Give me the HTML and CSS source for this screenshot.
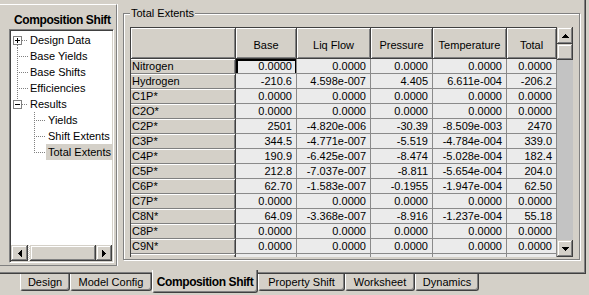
FILE: index.html
```html
<!DOCTYPE html>
<html>
<head>
<meta charset="utf-8">
<title>Composition Shift</title>
<link rel="stylesheet" href="styles.css">
</head>
<body>
<div class="window">
  <div class="body">
    <div class="left">
      <div class="title">Composition Shift</div>
      <div class="tree">
        <div class="items">
          <div class="row">
            <svg class="tw0" width="17" height="16" viewBox="0 0 17 16"><line x1="11" y1="8.5" x2="17" y2="8.5" class="dot"/><line x1="6.5" y1="13" x2="6.5" y2="16" class="dot"/><rect x="2.5" y="4.5" width="8" height="8" fill="#fff" stroke="#808080"/><rect x="4" y="8" width="5" height="1"/><rect x="6" y="6" width="1" height="5"/></svg>
            <span class="label">Design Data</span>
          </div>
          <div class="row">
            <svg class="tw0" width="17" height="16" viewBox="0 0 17 16"><line x1="6.5" y1="0" x2="6.5" y2="16" class="dot"/><line x1="8" y1="8.5" x2="17" y2="8.5" class="dot"/></svg>
            <span class="label">Base Yields</span>
          </div>
          <div class="row">
            <svg class="tw0" width="17" height="16" viewBox="0 0 17 16"><line x1="6.5" y1="0" x2="6.5" y2="16" class="dot"/><line x1="8" y1="8.5" x2="17" y2="8.5" class="dot"/></svg>
            <span class="label">Base Shifts</span>
          </div>
          <div class="row">
            <svg class="tw0" width="17" height="16" viewBox="0 0 17 16"><line x1="6.5" y1="0" x2="6.5" y2="16" class="dot"/><line x1="8" y1="8.5" x2="17" y2="8.5" class="dot"/></svg>
            <span class="label">Efficiencies</span>
          </div>
          <div class="row">
            <svg class="tw0" width="17" height="16" viewBox="0 0 17 16"><line x1="6.5" y1="0" x2="6.5" y2="4" class="dot"/><line x1="11" y1="8.5" x2="17" y2="8.5" class="dot"/><rect x="2.5" y="4.5" width="8" height="8" fill="#fff" stroke="#808080"/><rect x="4" y="8" width="5" height="1"/></svg>
            <span class="label">Results</span>
          </div>
          <div class="row">
            <svg class="tw1" width="35" height="16" viewBox="0 0 35 16"><line x1="23.5" y1="0" x2="23.5" y2="16" class="dot"/><line x1="25" y1="8.5" x2="35" y2="8.5" class="dot"/></svg>
            <span class="label">Yields</span>
          </div>
          <div class="row">
            <svg class="tw1" width="35" height="16" viewBox="0 0 35 16"><line x1="23.5" y1="0" x2="23.5" y2="16" class="dot"/><line x1="25" y1="8.5" x2="35" y2="8.5" class="dot"/></svg>
            <span class="label">Shift Extents</span>
          </div>
          <div class="row sel">
            <svg class="tw1" width="35" height="16" viewBox="0 0 35 16"><line x1="23.5" y1="0" x2="23.5" y2="9" class="dot"/><line x1="25" y1="8.5" x2="35" y2="8.5" class="dot"/></svg>
            <span class="label">Total Extents</span>
          </div>
        </div>
        <div class="hscroll">
          <div class="sbtn sbtn-h"><svg width="4" height="7" viewBox="0 0 4 7"><path d="M3 0h1v7H3V6H2V5H1V4H0V3h1V2h1V1h1z"/></svg></div>
          <div class="htrack"><div class="hthumb"></div></div>
          <div class="sbtn sbtn-h sbtn-r"><svg width="4" height="7" viewBox="0 0 4 7"><path d="M0 0h1v1h1v1h1v1h1v1H3v1H2v1H1v1H0z"/></svg></div>
        </div>
      </div>
    </div>

    <div class="group">
      <span class="legend">Total Extents</span>
      <div class="gridwrap">
        <div class="grid">
          <table>
            <colgroup>
              <col class="c-rh"><col class="c-base"><col class="c-liq"><col class="c-pres"><col class="c-temp"><col class="c-tot">
            </colgroup>
            <thead>
              <tr><th></th><th>Base</th><th>Liq Flow</th><th>Pressure</th><th>Temperature</th><th>Total</th></tr>
            </thead>
            <tbody>
              <tr><td class="rh">Nitrogen</td><td class="focus">0.0000</td><td>0.0000</td><td>0.0000</td><td>0.0000</td><td>0.0000</td></tr>
              <tr><td class="rh">Hydrogen</td><td>-210.6</td><td>4.598e-007</td><td>4.405</td><td>6.611e-004</td><td>-206.2</td></tr>
              <tr><td class="rh">C1P*</td><td>0.0000</td><td>0.0000</td><td>0.0000</td><td>0.0000</td><td>0.0000</td></tr>
              <tr><td class="rh">C2O*</td><td>0.0000</td><td>0.0000</td><td>0.0000</td><td>0.0000</td><td>0.0000</td></tr>
              <tr><td class="rh">C2P*</td><td>2501</td><td>-4.820e-006</td><td>-30.39</td><td>-8.509e-003</td><td>2470</td></tr>
              <tr><td class="rh">C3P*</td><td>344.5</td><td>-4.771e-007</td><td>-5.519</td><td>-4.784e-004</td><td>339.0</td></tr>
              <tr><td class="rh">C4P*</td><td>190.9</td><td>-6.425e-007</td><td>-8.474</td><td>-5.028e-004</td><td>182.4</td></tr>
              <tr><td class="rh">C5P*</td><td>212.8</td><td>-7.037e-007</td><td>-8.811</td><td>-5.654e-004</td><td>204.0</td></tr>
              <tr><td class="rh">C6P*</td><td>62.70</td><td>-1.583e-007</td><td>-0.1955</td><td>-1.947e-004</td><td>62.50</td></tr>
              <tr><td class="rh">C7P*</td><td>0.0000</td><td>0.0000</td><td>0.0000</td><td>0.0000</td><td>0.0000</td></tr>
              <tr><td class="rh">C8N*</td><td>64.09</td><td>-3.368e-007</td><td>-8.916</td><td>-1.237e-004</td><td>55.18</td></tr>
              <tr><td class="rh">C8P*</td><td>0.0000</td><td>0.0000</td><td>0.0000</td><td>0.0000</td><td>0.0000</td></tr>
              <tr><td class="rh">C9N*</td><td>0.0000</td><td>0.0000</td><td>0.0000</td><td>0.0000</td><td>0.0000</td></tr>
              <tr><td class="rh">C9P*</td><td>686.1</td><td>-2.023e-007</td><td>-0.2703</td><td>-3.991e-004</td><td>685.4</td></tr>
            </tbody>
          </table>
        </div>
        <div class="vscroll">
          <div class="sbtn sbtn-v"><svg width="7" height="4" viewBox="0 0 7 4"><path d="M3 0h1v1h1v1h1v1h1v1H0V3h1V2h1V1h1z"/></svg></div>
          <div class="vthumb"></div>
          <div class="vtrack"></div>
          <div class="sbtn sbtn-v"><svg width="7" height="4" viewBox="0 0 7 4"><path d="M0 0h7v1H6v1H5v1H4v1H3V3H2V2H1V1H0z"/></svg></div>
        </div>
      </div>
    </div>
  </div>

  <div class="tabs">
    <div class="tab">Design</div>
    <div class="tab">Model Config</div>
    <div class="tab active">Composition Shift</div>
    <div class="tab">Property Shift</div>
    <div class="tab">Worksheet</div>
    <div class="tab">Dynamics</div>
  </div>
</div>
</body>
</html>
```

FILE: styles.css
```css
* { box-sizing: border-box; }

html, body {
  margin: 0;
  padding: 0;
}

body {
  width: 589px;
  height: 295px;
  overflow: hidden;
  background: #d4d0c8;
  color: #000;
  font-family: "Liberation Sans", Arial, sans-serif;
  font-size: 11px;
}

.window {
  width: 589px;
  height: 295px;
}

/* tab control body */
.body {
  width: 586px;
  height: 274px;
  display: flex;
  align-items: flex-start;
  border-right: 1px solid #404040;
  border-bottom: 1px solid #404040;
  box-shadow: inset -1px -1px 0 #808080;
}

/* left navigation pane */
.left {
  width: 117px;
  height: 262px;
  margin-top: 4px;
  display: flex;
  flex-direction: column;
  border-top: 1px solid #fff;
  border-right: 1px solid #808080;
  border-bottom: 1px solid #808080;
  box-shadow: 1px 0 0 #fff;
}

.title {
  margin: 8px 0 2px 14px;
  font-size: 12px;
  font-weight: bold;
  letter-spacing: -0.4px;
  line-height: 14px;
  white-space: nowrap;
}

.tree {
  margin-left: 9px;
  width: 105px;
  height: 234px;
  padding: 1px;
  display: flex;
  flex-direction: column;
  background: #fff;
  border: 1px solid;
  border-color: #808080 #fff #fff #808080;
  box-shadow: inset 1px 1px 0 #404040, inset -1px -1px 0 #d4d0c8;
}

.items {
  flex: 1;
  padding-top: 1px;
  overflow: hidden;
}

.row {
  height: 16px;
  display: flex;
  align-items: center;
  white-space: nowrap;
}

.row svg {
  display: block;
  flex: none;
}

.dot {
  stroke: #808080;
  stroke-width: 1;
  stroke-dasharray: 1 1;
}

.label {
  padding: 0 2px;
  line-height: 16px;
  height: 16px;
}

.row.sel .label {
  background: #d4d0c8;
}

/* scrollbars */
.sbtn {
  flex: none;
  display: flex;
  align-items: center;
  justify-content: center;
  background: #d4d0c8;
  box-shadow: inset -1px -1px 0 #404040, inset 1px 1px 0 #d4d0c8,
              inset -2px -2px 0 #808080, inset 2px 2px 0 #fff;
}

.sbtn svg { display: block; }

.hscroll {
  height: 16px;
  display: flex;
}

.sbtn-h {
  width: 17px;
  height: 16px;
}

.sbtn-r { width: 16px; }

.htrack {
  flex: 1;
  display: flex;
  background-color: #d4d0c8;
  background-image: conic-gradient(#fff 25%, #d4d0c8 0 50%, #fff 0 75%, #d4d0c8 0);
  background-size: 2px 2px;
}

.hthumb {
  flex: 1;
  margin-left: 2px;
  background: #d4d0c8;
  box-shadow: inset -1px -1px 0 #404040, inset 1px 1px 0 #d4d0c8,
              inset -2px -2px 0 #808080, inset 2px 2px 0 #fff;
}

/* group box */
.group {
  position: relative;
  margin: 13px 0 0 6px;
  width: 457px;
  height: 247px;
  padding: 12px 5px 1px 5px;
  border: 1px solid #808080;
  box-shadow: inset 1px 1px 0 #fff, 1px 1px 0 #fff;
}

.legend {
  position: absolute;
  left: 6px;
  top: -7px;
  padding: 0 1px;
  line-height: 13px;
  background: #d4d0c8;
}

.gridwrap {
  margin-left: 1px;
  margin-top: 1px;
  height: 230px;
  display: flex;
}

.grid {
  width: 427px;
  height: 230px;
  overflow: hidden;
  border-left: 1px solid #404040;
  border-top: 1px solid #404040;
  background: #ebebeb;
}

table {
  table-layout: fixed;
  border-collapse: separate;
  border-spacing: 0;
  width: 426px;
}

.c-rh { width: 105px; }
.c-base { width: 61px; }
.c-liq { width: 74px; }
.c-pres { width: 62px; }
.c-temp { width: 74px; }
.c-tot { width: 50px; }

th {
  height: 31px;
  padding: 3px 0 0 0;
  font-weight: normal;
  text-align: center;
  vertical-align: middle;
  white-space: nowrap;
  background: #d4d0c8;
  border-right: 1px solid #404040;
  border-bottom: 1px solid #404040;
  box-shadow: inset 1px 1px 0 #fff, inset -1px -1px 0 #808080;
}

td {
  height: 15px;
  padding: 0 4px 0 0;
  line-height: 14px;
  text-align: right;
  white-space: nowrap;
  overflow: hidden;
  background: #ebebeb;
  border-right: 1px solid #8a8a8a;
  border-bottom: 1px solid #8a8a8a;
}

td.rh {
  padding: 0 0 0 1px;
  text-align: left;
  background: #d4d0c8;
  border-right: 1px solid #404040;
  border-bottom: 1px solid #808080;
  box-shadow: inset 0 1px 0 #fff, inset -1px 0 0 #808080;
}

td.focus {
  box-shadow: inset 2px 2px 0 #000, inset -1px 0 0 #000;
}

.vscroll {
  width: 16px;
  height: 230px;
  display: flex;
  flex-direction: column;
}

.sbtn-v {
  width: 16px;
  height: 17px;
}

.vthumb {
  height: 16px;
  background: #d4d0c8;
  box-shadow: inset -1px -1px 0 #404040, inset 1px 1px 0 #d4d0c8,
              inset -2px -2px 0 #808080, inset 2px 2px 0 #fff;
}

.vtrack {
  flex: 1;
  background: #c3c3c3;
}

/* bottom tabs */
.tabs {
  display: grid;
  grid-template-columns: 50px 82px 106px 87px 70px 64px;
  align-items: start;
  margin-left: 20px;
}

.tab {
  height: 17px;
  padding-top: 1px;
  line-height: 15px;
  text-align: center;
  white-space: nowrap;
  background: #d4d0c8;
  border-left: 1px solid #fff;
  border-right: 1px solid #404040;
  border-bottom: 1px solid #404040;
  border-radius: 0 0 3px 3px;
  box-shadow: inset -1px -1px 0 #808080;
}

.tab.active {
  margin-top: -4px;
  height: 23px;
  padding-top: 5px;
  font-size: 12px;
  font-weight: bold;
  letter-spacing: -0.4px;
}
```
